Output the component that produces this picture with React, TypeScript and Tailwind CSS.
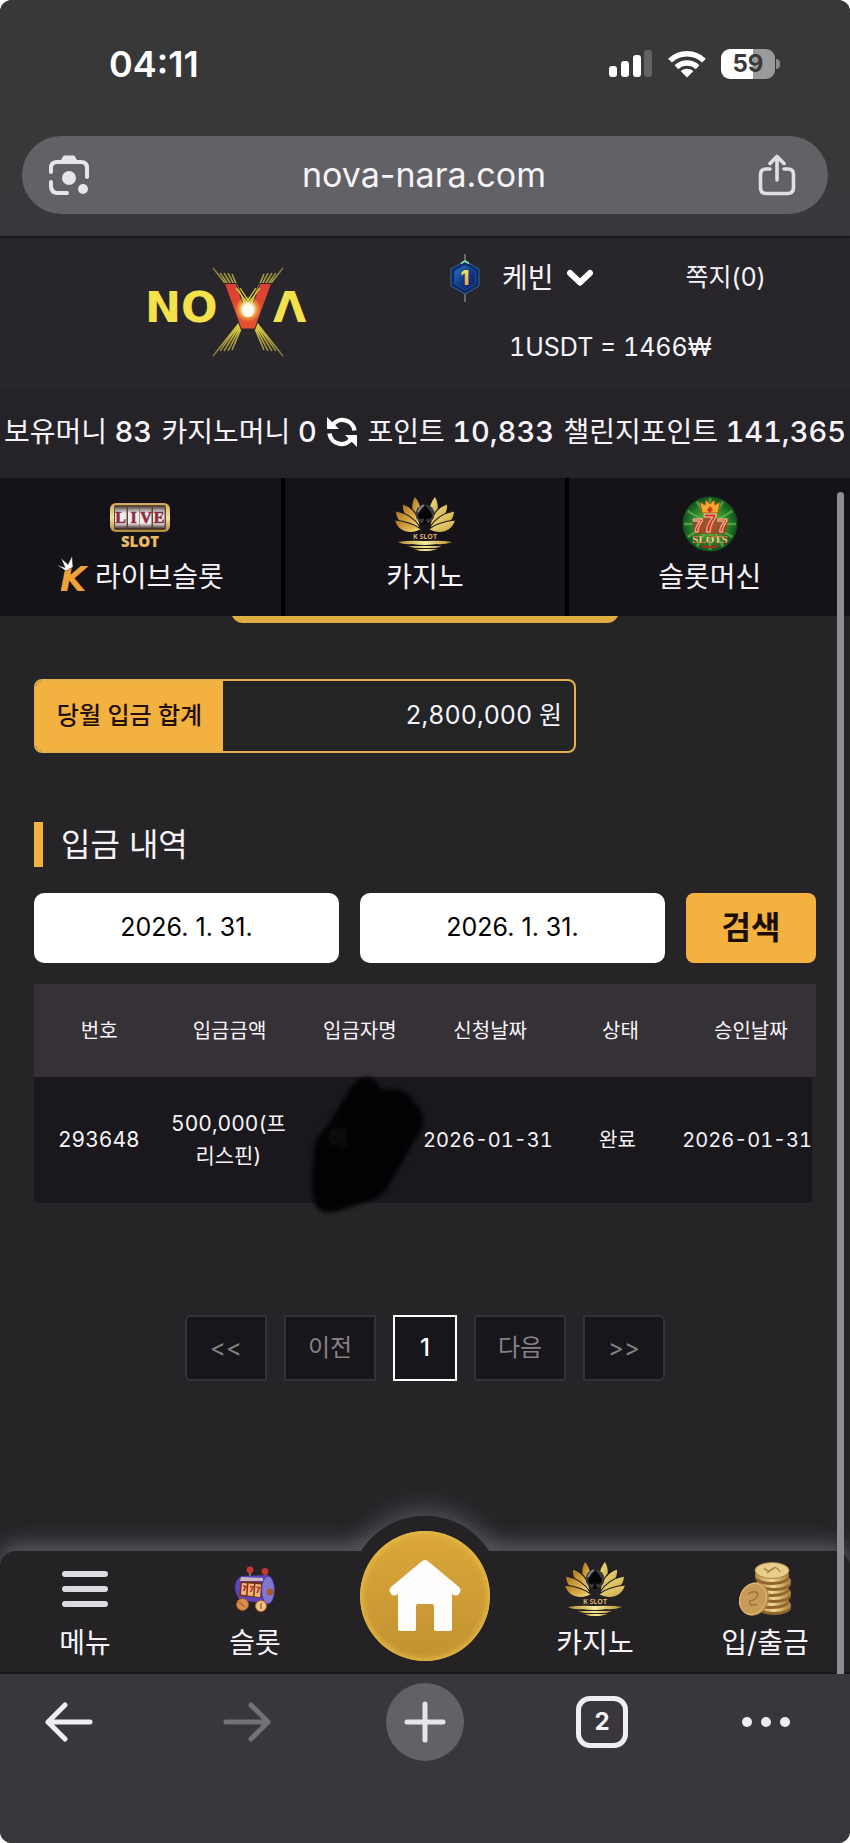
import type { ReactNode } from "react";

function SignalIcon() {
  return (
    <svg width="44" height="28" viewBox="0 0 44 28" fill="#fff" aria-hidden="true">
      <rect x="0" y="16" width="8" height="11" rx="3" />
      <rect x="12" y="11" width="8" height="16" rx="3" />
      <rect x="24" y="5" width="8" height="22" rx="3" />
      <rect x="35" y="0" width="8" height="27" rx="3" fill="#636363" />
    </svg>
  );
}

function WifiIcon() {
  return (
    <svg width="38" height="28" viewBox="0 0 38 28" fill="none" stroke="#fff" strokeWidth="5.4" aria-hidden="true">
      <path d="M2 10.6C11.5 1.400 26.500 1.400 36 10.600" />
      <path d="M8.400 17.200C14.500 11.600 23.500 11.600 29.600 17.200" />
      <path d="M19 27.500L12.800 21.200C16.400 18 21.600 18 25.200 21.200Z" fill="#fff" stroke="none" />
    </svg>
  );
}

function Battery() {
  return (
    <div className="flex items-center gap-px">
      <div className="flex h-[30px] w-[54px] items-center justify-center rounded-[9px] bg-[linear-gradient(90deg,#fff_59%,#9a9a9a_59%)] text-[24px] leading-none font-bold text-[#383838]">
        59
      </div>
      <div className="h-[10px] w-[4px] rounded-r-full bg-[#8a8a8a]" />
    </div>
  );
}

function LensIcon() {
  return (
    <svg width="42" height="42" viewBox="0 0 42 42" fill="none" stroke="#e6e5ec" strokeWidth="4" strokeLinecap="round" aria-hidden="true">
      <path d="M3 18V14Q3 8 9 8H33Q39 8 39 14V23" />
      <path d="M3 28V32Q3 39 10 39H19" />
      <path d="M12 8L15 2.500Q15.500 1.500 17 1.500H25Q26.500 1.500 27 2.500L30 8Z" fill="#e6e5ec" stroke="none" />
      <circle cx="21" cy="24" r="7" fill="#e6e5ec" stroke="none" />
      <circle cx="35" cy="35" r="5" fill="#e6e5ec" stroke="none" />
    </svg>
  );
}

function ShareIcon() {
  return (
    <svg width="38" height="42" viewBox="0 0 38 42" fill="none" stroke="#e0dfe6" strokeWidth="3.600" strokeLinecap="round" strokeLinejoin="round" aria-hidden="true">
      <path d="M12 15H8Q2.500 15 2.500 20.500V33.500Q2.500 39.500 8.500 39.500H29.500Q35.500 39.500 35.500 33.500V20.500Q35.500 15 30 15H26" />
      <path d="M19 26V3M12 9.500L19 2.500L26 9.500" />
    </svg>
  );
}

function NovaLogo() {
  return (
    <svg width="168" height="92" viewBox="0 0 168 92" role="img" aria-label="NOVA">
      <defs>
        <radialGradient id="rays" gradientUnits="userSpaceOnUse" cx="103" cy="45" r="56">
          <stop offset="0" stopColor="#fff45a" />
          <stop offset="0.500" stopColor="#c2b43e" />
          <stop offset="1" stopColor="#77713c" />
        </radialGradient>
        <radialGradient id="flare">
          <stop offset="0" stopColor="#fff" />
          <stop offset="0.400" stopColor="#fff6d8" />
          <stop offset="0.700" stopColor="#f7e24c" stopOpacity="0.500" />
          <stop offset="1" stopColor="#f7e24c" stopOpacity="0" />
        </radialGradient>
        <linearGradient id="vred" x1="0" y1="0" x2="0" y2="1">
          <stop offset="0" stopColor="#d93a35" />
          <stop offset="1" stopColor="#e8582f" />
        </linearGradient>
      </defs>
      <g stroke="url(#rays)" strokeWidth="1.600" fill="none">
        <path d="M68 2L138 90M75 7L131 85M79 7L127 85M83 7L123 85M87 8L119 84" />
        <path d="M138 2L68 90M131 7L75 85M127 7L79 85M123 7L83 85M119 8L87 84" />
      </g>
      <g fontFamily="DejaVu Sans" fontWeight="700">
        <text x="0" y="56" fontSize="43" fill="#f5e14c">NO</text>
        <text x="128" y="56" fontSize="43" fill="#f5e14c">Λ</text>
        <text x="103" y="63" fontSize="62" textAnchor="middle" fill="url(#vred)" stroke="#28262b" strokeWidth="1">V</text>
      </g>
      <path d="M91 22L103 38L115 22M95 22L103 34L111 22" stroke="#d9ca46" strokeWidth="1.300" fill="none" />
      <circle cx="103" cy="43" r="13" fill="url(#flare)" />
      <circle cx="103" cy="45" r="6" fill="#fffdf2" />
    </svg>
  );
}

function LevelBadge() {
  return (
    <svg width="30" height="50" viewBox="0 0 30 50" role="img" aria-label="레벨 1">
      <defs>
        <linearGradient id="badge" x1="0" y1="0" x2="1" y2="1">
          <stop offset="0" stopColor="#2b7cc8" />
          <stop offset="0.500" stopColor="#123a86" />
          <stop offset="1" stopColor="#0b1f58" />
        </linearGradient>
        <linearGradient id="badgeNum" x1="0" y1="0" x2="0" y2="1">
          <stop offset="0" stopColor="#f7f56a" />
          <stop offset="1" stopColor="#e98b3c" />
        </linearGradient>
      </defs>
      <path d="M15 1V49" stroke="#8a9694" strokeWidth="1.200" />
      <path d="M15 8L29 16V33L15 41L1 33V16Z" fill="#0d2a66" stroke="#2c5c8c" strokeWidth="1.200" />
      <path d="M15 12L25.500 18V31L15 37L4.500 31V18Z" fill="url(#badge)" stroke="#1f4f95" />
      <path d="M11 10.500L15 8L19 10.500" stroke="#8fe0b0" strokeWidth="1.600" fill="none" />
      <text x="15" y="32" textAnchor="middle" fontFamily="Inter" fontWeight="800" fontSize="20" fill="url(#badgeNum)">1</text>
    </svg>
  );
}

function RefreshIcon() {
  return (
    <svg width="32" height="32" viewBox="0 0 32 32" fill="none" stroke="#fff" strokeWidth="4.400" aria-hidden="true">
      <path d="M6.500 9.500A12 12 0 0 1 28.500 14.500" />
      <path d="M25.500 22.500A12 12 0 0 1 3.500 17.500" />
      <path d="M1 1V13H13Z" fill="#fff" stroke="none" />
      <path d="M31 31V19H19Z" fill="#fff" stroke="none" />
    </svg>
  );
}

function LiveSlotIcon() {
  return (
    <svg width="62" height="56" viewBox="0 0 62 56" role="img" aria-label="LIVE SLOT">
      <defs>
        <linearGradient id="liveGold" x1="0" y1="0" x2="0" y2="1">
          <stop offset="0" stopColor="#d2a85c" />
          <stop offset="0.500" stopColor="#f3e4a0" />
          <stop offset="1" stopColor="#b0893f" />
        </linearGradient>
        <linearGradient id="reel" x1="0" y1="0" x2="0" y2="1">
          <stop offset="0" stopColor="#4a3a35" />
          <stop offset="0.300" stopColor="#efeaf0" />
          <stop offset="0.750" stopColor="#efeaf0" />
          <stop offset="1" stopColor="#3a201c" />
        </linearGradient>
      </defs>
      <rect x="1" y="7" width="60" height="29" rx="6" fill="url(#liveGold)" />
      <rect x="5" y="9" width="52" height="25" rx="2" fill="#5c4826" />
      {[6, 19, 31, 44].map((x) => (
        <rect key={x} x={x} y="10" width="11.500" height="23" fill="url(#reel)" />
      ))}
      <g fontFamily="Liberation Serif" fontWeight="700" fontSize="16" fill="#8d2c3d" stroke="#8d2c3d" strokeWidth="0.600" textAnchor="middle">
        <text x="11.500" y="27">L</text>
        <text x="24.500" y="27">I</text>
        <text x="37" y="27">V</text>
        <text x="50" y="27">E</text>
      </g>
      <text x="31" y="51" textAnchor="middle" fontFamily="Open Sans" fontWeight="800" fontSize="15" fill="#e8b968">SLOT</text>
    </svg>
  );
}

function LotusIcon() {
  return (
    <svg width="62" height="56" viewBox="0 0 62 56" role="img" aria-label="K SLOT">
      <defs>
        <linearGradient id="petalL" x1="0" y1="0" x2="1" y2="1">
          <stop offset="0" stopColor="#a87420" />
          <stop offset="0.600" stopColor="#dcae4a" />
          <stop offset="1" stopColor="#f6e58c" />
        </linearGradient>
        <linearGradient id="petalR" x1="0" y1="0" x2="1" y2="1">
          <stop offset="0" stopColor="#f4e68a" />
          <stop offset="1" stopColor="#c9a23e" />
        </linearGradient>
        <linearGradient id="water">
          <stop offset="0" stopColor="#b98a2c" />
          <stop offset="0.500" stopColor="#f5eb9d" />
          <stop offset="1" stopColor="#b98a2c" />
        </linearGradient>
      </defs>
      <g fill="url(#petalL)">
        <path d="M21 1C27 8 28 18 25 26C18 18 16 10 21 1Z" />
        <path d="M9 8C18 11 24 19 26 29C15 26 8 18 9 8Z" />
        <path d="M2 15C12 17 21 23 26 31C13 33 2 26 2 15Z" />
        <path d="M1 24C10 25 19 27 27 33C17 39 4 36 1 24Z" />
      </g>
      <g fill="url(#petalR)">
        <path d="M41 1C35 8 34 18 37 26C44 18 46 10 41 1Z" />
        <path d="M53 8C44 11 38 19 36 29C47 26 54 18 53 8Z" />
        <path d="M60 15C50 17 41 23 36 31C49 33 60 26 60 15Z" />
        <path d="M61 24C52 25 43 27 35 33C45 39 58 36 61 24Z" />
      </g>
      <g stroke="#1b181b" strokeWidth="1.100" fill="none">
        <path d="M9 8C18 11 24 19 26 29M2 15C12 17 21 23 26 31M1 24C10 25 19 27 27 33" />
        <path d="M53 8C44 11 38 19 36 29M60 15C50 17 41 23 36 31M61 24C52 25 43 27 35 33" />
      </g>
      <circle cx="31" cy="18" r="9.500" fill="#3a393f" />
      <path d="M31 9C36 15 38 17 38 20C37 24 33 24 32 22C32 25 33 26 34 28H28C29 26 30 25 30 22C28 24 25 24 24 20C24 17 27 15 31 9Z" fill="#060607" />
      <path d="M24 16Q26 11 30 9" stroke="#8d8d96" strokeWidth="1.600" fill="none" />
      <text x="31" y="43" textAnchor="middle" fontFamily="Open Sans" fontWeight="700" fontSize="7" fill="#dcae63">K SLOT</text>
      <path d="M4 46Q15 44 30 45Q48 44 58 46Q50 49 43 48Q30 50 18 48Q10 49 4 46Z" fill="url(#water)" />
      <path d="M14 50H48L42 52H20Z" fill="url(#water)" />
      <path d="M20 53H44L36 55H26Z" fill="url(#water)" />
    </svg>
  );
}

function SevensIcon() {
  const rays = [0, 30, 60, 90, 120, 150, 180, 210, 240, 270, 300, 330];
  return (
    <svg width="56" height="56" viewBox="0 0 56 56" role="img" aria-label="777 SLOTS">
      <defs>
        <radialGradient id="green">
          <stop offset="0" stopColor="#8ad04a" />
          <stop offset="0.600" stopColor="#2f8a2a" />
          <stop offset="1" stopColor="#0f4f1c" />
        </radialGradient>
      </defs>
      <circle cx="28" cy="28" r="27.500" fill="url(#green)" />
      {rays.map((a) => (
        <path key={a} d="M28 28L26.500 2H29.500Z" fill="#7fd060" opacity="0.500" transform={`rotate(${a} 28 28)`} />
      ))}
      <path d="M20 17L18 6L23 9L24 4L28 8L32 4L33 9L38 6L36 17Z" fill="#f2a531" stroke="#9c5a12" />
      <path d="M25 14L28 10L31 14L28 17Z" fill="#cc3b22" />
      <path d="M10 26H20L22 20H34L36 26H46L43 38H13Z" fill="#b02a1e" opacity="0.700" />
      <text x="28" y="36" textAnchor="middle" fontFamily="Liberation Sans" fontWeight="700" fontSize="19" fill="#d8232c" stroke="#f6c09a" strokeWidth="1">
        7<tspan fontSize="25">7</tspan>7
      </text>
      <text x="28" y="47" textAnchor="middle" fontFamily="Liberation Serif" fontWeight="700" fontSize="11" fill="#ffe9a8" stroke="#b4341c" strokeWidth="0.300">SLOTS</text>
      <path d="M20 50Q28 52 36 50" stroke="#b3261c" strokeWidth="2" fill="none" />
    </svg>
  );
}

function KIcon() {
  return (
    <svg width="34" height="44" viewBox="0 0 34 44" aria-hidden="true">
      <text x="3" y="36" fontFamily="DejaVu Sans" fontWeight="700" fontStyle="italic" fontSize="34" fill="#f0a13a">K</text>
      <path d="M0 10L8 12.500L4 3L11 9.500L15 1L16 12L9 16Z" fill="#fff" stroke="#151318" strokeWidth="0.500" />
    </svg>
  );
}

function SlotCartIcon() {
  return (
    <svg width="42" height="46" viewBox="0 0 42 46" aria-hidden="true">
      <path d="M16 4V12M31 6V12" stroke="#a38b8b" strokeWidth="1.500" />
      <circle cx="16" cy="4" r="3.400" fill="#c2392f" />
      <circle cx="31" cy="5.500" r="3.400" fill="#c2392f" />
      <path d="M8 10L34 9Q41 16 40 28Q39 36 34 38L6 34Q1 28 1 20Q2 12 8 10Z" fill="#5b45b8" />
      <ellipse cx="34" cy="24" rx="6.500" ry="14" fill="#8078cf" stroke="#4530a0" />
      <path d="M7 11L29 12V15H6Z" fill="#cbb5c2" />
      <path d="M7 15L28 16L27 32L5 30Z" fill="#7a3020" />
      <path d="M8 17L13 17.500L12 29L7 28.500ZM14.500 17.500L20 18L19 30L13.500 29.500ZM21.500 18L27 18.500L26 31L20.500 30.500Z" fill="#f0b777" />
      <path d="M9 20L12 20.500L9.500 25M16 20.500L19 21L16.500 26M22.500 21L25.500 21.500L23 27" stroke="#b32e24" strokeWidth="1.600" fill="none" />
      <circle cx="36" cy="26" r="3.500" fill="#a35a33" />
      <circle cx="8.500" cy="38.500" r="6" fill="#d98e4d" stroke="#9b5427" />
      <circle cx="27" cy="40" r="5.500" fill="#efc488" stroke="#a8672f" />
      <path d="M5 36L11 41M27 37V43" stroke="#a8672f" strokeWidth="1.500" />
    </svg>
  );
}

function CoinsIcon() {
  return (
    <svg width="54" height="56" viewBox="0 0 54 56" aria-hidden="true">
      <defs>
        <linearGradient id="coinEdge">
          <stop offset="0" stopColor="#b98c45" />
          <stop offset="0.500" stopColor="#f0d791" />
          <stop offset="1" stopColor="#a87a3a" />
        </linearGradient>
      </defs>
      {[44, 38, 32, 26, 20, 14].map((y, i) => (
        <g key={y}>
          <ellipse cx={i % 2 ? 34 : 36} cy={y + 3} rx="17" ry="7" fill="#8f642d" />
          <ellipse cx={i % 2 ? 34 : 36} cy={y} rx="17" ry="7" fill="url(#coinEdge)" />
        </g>
      ))}
      <ellipse cx="34" cy="9.500" rx="17" ry="8" fill="#e9cd8b" stroke="#a98146" />
      <path d="M26 7Q30 12 34 8T42 11M29 12L38 6" stroke="#a98146" strokeWidth="1.300" fill="none" />
      <ellipse cx="16" cy="38" rx="14.500" ry="17" transform="rotate(22 16 38)" fill="#b98a4a" />
      <ellipse cx="15" cy="38" rx="13" ry="16" transform="rotate(22 15 38)" fill="#c99b58" stroke="#e3bd7b" />
      <path d="M10 33Q18 28 20 34Q18 39 12 40Q11 46 19 43" stroke="#a37538" strokeWidth="1.500" fill="none" />
    </svg>
  );
}

function ArrowIcon({ color, forward = false }: { color: string; forward?: boolean }) {
  return (
    <svg width="48" height="40" viewBox="0 0 48 40" fill="none" stroke={color} strokeWidth="5" strokeLinecap="round" strokeLinejoin="round" aria-hidden="true">
      <path d={forward ? "M3 20H45M28 3L45 20L28 37" : "M45 20H3M20 3L3 20L20 37"} />
    </svg>
  );
}

function Balance({ label, children }: { label: string; children: ReactNode }) {
  return (
    <span>
      {label} <b className="text-[29px] font-medium">{children}</b>
    </span>
  );
}

function Tab({ icon, children }: { icon: ReactNode; children: ReactNode }) {
  return (
    <a href="#" className="flex flex-1 flex-col items-center pt-4">
      <span className="flex h-[60px] items-center">{icon}</span>
      <span className="flex h-[46px] items-center gap-1 text-[28px]">{children}</span>
    </a>
  );
}

function BottomItem({ icon, children }: { icon: ReactNode; children: ReactNode }) {
  return (
    <a href="#" className="flex flex-1 flex-col items-center pt-2">
      <span className="flex h-[60px] items-center">{icon}</span>
      <span className="flex h-12 items-center text-[28px]">{children}</span>
    </a>
  );
}

const headings = ["번호", "입금금액", "입금자명", "신청날짜", "상태", "승인날짜"];
const pager = "flex h-[66px] items-center justify-center border-2 bg-[#18161b] text-[24px]";

export default function App() {
  return (
    <div className="bg-white">
      <div className="flex min-h-screen flex-col overflow-hidden rounded-xl bg-[#262427] font-['Inter','Noto_Sans_CJK_KR',sans-serif] text-[#f6f4f8]">
        <div className="border-b-2 border-[#19181b] bg-linear-to-b from-[#383838] from-60% to-[#39373d] pb-[22px]">
          <div className="flex h-[136px] items-center justify-between pr-[70px] pb-2 pl-[109px]">
            <span className="text-[36px] leading-none font-semibold text-white">04:11</span>
            <div className="flex items-center gap-[15px]">
              <SignalIcon />
              <WifiIcon />
              <Battery />
            </div>
          </div>
          <div className="mx-[22px] flex h-[78px] items-center justify-between rounded-full bg-[#626165] pr-8 pl-[26px]">
            <button aria-label="렌즈"><LensIcon /></button>
            <span className="text-[34px] leading-none">nova-nara.com</span>
            <button aria-label="공유"><ShareIcon /></button>
          </div>
        </div>

        <div className="relative flex flex-1 flex-col">
          <header className="flex h-[152px] bg-[#28262b]">
            <a href="#" className="flex flex-1 justify-center pt-7 pl-8"><NovaLogo /></a>
            <div className="flex w-[424px] flex-col">
              <div className="flex h-[80px] items-center pl-6">
                <LevelBadge />
                <button className="ml-[22px] flex items-center gap-3 text-[28px]">
                  케빈
                  <svg width="28" height="18" viewBox="0 0 28 18" fill="none" stroke="#fff" strokeWidth="6" strokeLinecap="round" strokeLinejoin="round" aria-hidden="true">
                    <path d="M4 4L14 13.500L24 4" />
                  </svg>
                </button>
                <a href="#" className="ml-[92px] text-[25px]">쪽지(0)</a>
              </div>
              <div className="flex h-[60px] items-center pl-[83px] text-[25px] tabular-nums">1USDT = 1466₩</div>
            </div>
          </header>

          <div className="flex h-[88px] items-center justify-between bg-[#252328] px-1 pb-1 text-[28px] whitespace-nowrap tabular-nums">
            <Balance label="보유머니">83</Balance>
            <Balance label="카지노머니">0</Balance>
            <button aria-label="새로고침"><RefreshIcon /></button>
            <Balance label="포인트">10,833</Balance>
            <Balance label="챌린지포인트">141,365</Balance>
          </div>

          <nav className="flex h-[138px] divide-x-[4px] divide-black bg-[#151318]">
            <Tab icon={<LiveSlotIcon />}><KIcon />라이브슬롯</Tab>
            <Tab icon={<LotusIcon />}>카지노</Tab>
            <Tab icon={<SevensIcon />}>슬롯머신</Tab>
          </nav>

          <main className="flex-1">
            <div className="flex h-[7px] items-end justify-center overflow-hidden">
              <button aria-label="입금신청" className="h-14 w-[388px] shrink-0 rounded-xl bg-[#e0ad45]" />
            </div>

            <div className="px-[34px]">
              <dl className="mt-14 flex h-[74px] w-[542px] items-stretch overflow-hidden rounded-lg border-2 border-[#e3b04c] bg-[#222426] text-[24px]">
                <dt className="flex w-[187px] items-center justify-center bg-[#f3b13f] font-medium text-[#1f0f08]">당월 입금 합계</dt>
                <dd className="flex flex-1 items-center justify-end pr-3 text-[25px] tabular-nums">2,800,000 원</dd>
              </dl>

              <h2 className="mt-[69px] flex h-[45px] items-center border-l-[9px] border-[#f3b13f] pl-[18px] text-[32px]">입금 내역</h2>

              <form className="mt-[26px] flex h-[70px] gap-[21px]" onSubmit={(e) => e.preventDefault()}>
                <input aria-label="시작일" defaultValue="2026. 1. 31." className="w-0 flex-1 rounded-[10px] bg-white text-center text-[25px] text-black" />
                <input aria-label="종료일" defaultValue="2026. 1. 31." className="w-0 flex-1 rounded-[10px] bg-white text-center text-[25px] text-black" />
                <button className="w-[130px] rounded-lg bg-[#f3b13f] text-[32px] font-bold text-[#1a0d04]">검색</button>
              </form>

              <div className="relative mt-[21px]">
                <table className="block w-full text-[20px]">
                  <thead className="block bg-[#353136]">
                    <tr className="grid h-[93px] grid-cols-6 items-center">
                      {headings.map((h) => (
                        <th key={h} scope="col" className="font-normal">{h}</th>
                      ))}
                    </tr>
                  </thead>
                  <tbody className="mr-1 block rounded-b-sm bg-[#1a181c]">
                    <tr className="grid h-[126px] grid-cols-6 items-center text-center leading-8 whitespace-nowrap tabular-nums">
                      <td className="text-[21px]">293648</td>
                      <td className="text-[21px]">500,000(프<br />리스핀)</td>
                      <td />
                      <td>2026-01-31</td>
                      <td>완료</td>
                      <td>2026-01-31</td>
                    </tr>
                  </tbody>
                </table>
                <svg className="absolute top-[86px] left-[272px] blur-[2px]" width="124" height="150" viewBox="0 0 124 150" aria-hidden="true">
                  <path d="M57 8Q66 3 76 20Q100 14 111 36Q120 46 116 58L83 115Q76 128 62 131L35 140Q12 148 8 130Q4 115 8 87Q6 70 20 58L45 18Q50 10 57 8Z" fill="#020103" />
                  <text x="23" y="76" fontSize="20" fill="#2a262b">이</text>
                </svg>
              </div>

              <nav aria-label="페이지" className="mt-[112px] mb-[150px] flex justify-center gap-[17px] text-[#858188]">
                <button className={`${pager} w-[82px] rounded-l-md border-[#343238]`}>&lt;&lt;</button>
                <button className={`${pager} w-[92px] border-[#343238]`}>이전</button>
                <button className={`${pager} w-[64px] border-white font-medium text-white`}>1</button>
                <button className={`${pager} w-[92px] border-[#343238]`}>다음</button>
                <button className={`${pager} w-[82px] rounded-r-md border-[#343238]`}>&gt;&gt;</button>
              </nav>
            </div>
          </main>

          <footer className="relative h-[123px]">
            <div className="absolute top-[-35px] left-1/2 size-[152px] -translate-x-1/2 rounded-full shadow-[0_-4px_24px_2px_#56535a]" />
            <div className="absolute inset-0 rounded-t-2xl bg-[#242225] shadow-[0_-8px_20px_0px_#59565c]" />
            <div className="absolute top-[-35px] left-1/2 size-[152px] -translate-x-1/2 rounded-full bg-[#242225]" />
            <div className="relative flex h-full border-b-2 border-[#19181b]">
              <BottomItem
                icon={
                  <svg width="46" height="36" viewBox="0 0 46 36" stroke="#dddbe0" strokeWidth="6" strokeLinecap="round" aria-hidden="true">
                    <path d="M3 3H43M3 18H43M3 33H43" />
                  </svg>
                }
              >
                메뉴
              </BottomItem>
              <BottomItem icon={<SlotCartIcon />}>슬롯</BottomItem>
              <div className="flex flex-1 justify-center">
                <a href="#" aria-label="홈" className="-mt-5 flex size-[130px] items-center justify-center rounded-full bg-linear-to-b from-[#dca73b] to-[#c19230] shadow-[inset_0_0_6px_2px_#e9bd48]">
                  <svg width="74" height="76" viewBox="0 0 74 76" fill="#fffdfb" aria-hidden="true">
                    <path d="M37 2Q39 2 41 4L71 29Q74 32 71 36Q68 39 64 36V71Q64 73 62 73H48Q46 73 46 71V48Q46 46 44 46H30Q28 46 28 48V71Q28 73 26 73H12Q10 73 10 71V36Q6 39 3 36Q0 32 3 29L33 4Q35 2 37 2Z" />
                  </svg>
                </a>
              </div>
              <BottomItem icon={<LotusIcon />}>카지노</BottomItem>
              <BottomItem icon={<CoinsIcon />}>입/출금</BottomItem>
            </div>
          </footer>

          <div className="absolute top-[254px] right-[6px] bottom-0 w-[7px] rounded-t-full bg-[#8f8d93]" />
        </div>

        <div className="relative grid h-[169px] grid-cols-[1fr_78px_1fr] items-start bg-[#39373b] pt-[9px]">
          <div className="flex justify-between pr-[115px] pl-[45px]">
            <button aria-label="뒤로" className="flex h-[78px] items-center"><ArrowIcon color="#f0eef2" /></button>
            <button aria-label="앞으로" className="flex h-[78px] items-center"><ArrowIcon color="#737176" forward /></button>
          </div>
          <button aria-label="새 탭" className="flex size-[78px] items-center justify-center rounded-full bg-[#626165]">
            <svg width="42" height="42" viewBox="0 0 42 42" stroke="#e6e5ea" strokeWidth="5" strokeLinecap="round" aria-hidden="true">
              <path d="M3 21H39M21 3V39" />
            </svg>
          </button>
          <div className="flex justify-between pr-[60px] pl-[112px]">
            <button aria-label="탭 2개" className="flex h-[78px] items-center">
              <span className="flex size-[52px] items-center justify-center rounded-[14px] border-[5px] border-[#efedf2] text-[24px] leading-none font-bold">2</span>
            </button>
            <button aria-label="더보기" className="flex h-[78px] items-center gap-[9px]">
              <span className="size-[10px] rounded-full bg-[#efedf2]" />
              <span className="size-[10px] rounded-full bg-[#efedf2]" />
              <span className="size-[10px] rounded-full bg-[#efedf2]" />
            </button>
          </div>
        </div>
      </div>
    </div>
  );
}
